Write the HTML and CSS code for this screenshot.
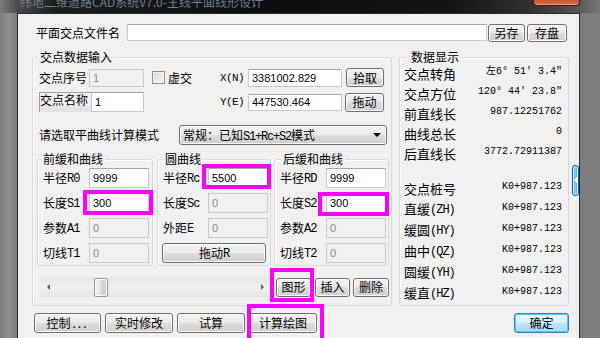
FILE: index.html
```html
<!DOCTYPE html>
<html>
<head>
<meta charset="utf-8">
<title>主线平面线形设计</title>
<link rel="stylesheet" href="styles.css">
</head>
<body>
<div class="window">
  <div class="titlebar">
    <span class="title">纬地二维道路CAD系统V7.0-主线平面线形设计</span>
    <span class="close"></span>
  </div>
  <div class="frame">
    <div class="client">
      <div class="file-row">
        <span class="lbl file-lbl">平面交点文件名</span>
        <div class="tb file-tb"></div>
        <button class="btn b-saveas">另存</button>
        <button class="btn b-save">存盘</button>
      </div>

      <div class="main">
        <div class="group g-input">
          <div class="legend lg-input">交点数据输入</div>
          <div class="row row-a">
            <span class="lbl w50">交点序号</span>
            <div class="tb dis w55 h18">1</div>
            <span class="chk-wrap"><span class="chk"></span><span class="chk-lbl">虚交</span></span>
            <span class="lbl coord">X(N)</span>
            <div class="tb w94 h18">3381002.829</div>
            <button class="btn b-pick">拾取</button>
          </div>
          <div class="row row-b">
            <span class="lbl name-box">交点名称</span>
            <div class="tb w53 h20">1</div>
            <span class="spacer"></span>
            <span class="lbl coord">Y(E)</span>
            <div class="tb w94 h17">447530.464</div>
            <button class="btn b-drag">拖动</button>
          </div>
          <div class="row row-c">
            <span class="lbl mode-lbl">请选取平曲线计算模式</span>
            <div class="combo">常规：已知<span class="m">S1+Rc+S2</span>模式<span class="arrow"></span></div>
          </div>
          <div class="sub-row">
            <div class="group sg sg1">
              <div class="legend">前缓和曲线</div>
              <div class="frow"><span class="lbl">半径<span class="m">R0</span></span><div class="tb ftb">9999</div></div>
              <div class="frow"><span class="lbl">长度<span class="m">S1</span></span><div class="tb ftb mk mk-s1">300</div></div>
              <div class="frow"><span class="lbl">参数<span class="m">A1</span></span><div class="tb ftb dis">0</div></div>
              <div class="frow"><span class="lbl">切线<span class="m">T1</span></span><div class="tb ftb dis">0</div></div>
            </div>
            <div class="group sg sg2">
              <div class="legend">圆曲线</div>
              <div class="frow"><span class="lbl">半径<span class="m">Rc</span></span><div class="tb ftb mk mk-rc">5500</div></div>
              <div class="frow"><span class="lbl">长度<span class="m">Sc</span></span><div class="tb ftb dis">0</div></div>
              <div class="frow"><span class="lbl">外距<span class="m">E</span></span><div class="tb ftb dis">0</div></div>
              <div class="frow"><button class="btn b-dragr">拖动<span class="m">R</span></button></div>
            </div>
            <div class="group sg sg3">
              <div class="legend">后缓和曲线</div>
              <div class="frow"><span class="lbl">半径<span class="m">RD</span></span><div class="tb ftb">9999</div></div>
              <div class="frow"><span class="lbl">长度<span class="m">S2</span></span><div class="tb ftb mk mk-s2">300</div></div>
              <div class="frow"><span class="lbl">参数<span class="m">A2</span></span><div class="tb ftb dis">0</div></div>
              <div class="frow"><span class="lbl">切线<span class="m">T2</span></span><div class="tb ftb dis">0</div></div>
            </div>
          </div>
          <div class="row scroll-row">
            <div class="hscroll">
              <span class="arr arr-l"></span>
              <span class="thumb"></span>
              <span class="arr arr-r"></span>
            </div>
            <button class="btn b-shape mk mk-shape">图形</button>
            <button class="btn b-ins">插入</button>
            <button class="btn b-del">删除</button>
          </div>
        </div>

        <div class="group g-data">
          <div class="legend lg-data">数据显示</div>
          <div class="dblock">
            <div class="drow"><span class="dl">交点转角</span><span class="dv">左6° 51′ 3.4″</span></div>
            <div class="drow"><span class="dl">交点方位</span><span class="dv">120° 44′ 23.8″</span></div>
            <div class="drow"><span class="dl">前直线长</span><span class="dv">987.12251762</span></div>
            <div class="drow"><span class="dl">曲线总长</span><span class="dv">0</span></div>
            <div class="drow"><span class="dl">后直线长</span><span class="dv">3772.72911387</span></div>
          </div>
          <div class="dblock dblock2">
            <div class="drow"><span class="dl">交点桩号</span><span class="dv">K0+987.123</span></div>
            <div class="drow"><span class="dl">直缓<span class="m">(ZH)</span></span><span class="dv">K0+987.123</span></div>
            <div class="drow"><span class="dl">缓圆<span class="m">(HY)</span></span><span class="dv">K0+987.123</span></div>
            <div class="drow"><span class="dl">曲中<span class="m">(QZ)</span></span><span class="dv">K0+987.123</span></div>
            <div class="drow"><span class="dl">圆缓<span class="m">(YH)</span></span><span class="dv">K0+987.123</span></div>
            <div class="drow"><span class="dl">缓直<span class="m">(HZ)</span></span><span class="dv">K0+987.123</span></div>
          </div>
        </div>

        <div class="handle"></div>
      </div>

      <div class="bottom-row">
        <button class="btn b-ctrl">控制<span class="dots">...</span></button>
        <button class="btn b-bot">实时修改</button>
        <button class="btn b-bot">试算</button>
        <button class="btn b-bot mk mk-calc">计算绘图</button>
        <button class="btn b-ok">确定</button>
      </div>
    </div>
  </div>
</div>
</body>
</html>
```

FILE: styles.css
```css
* { box-sizing: border-box; }

body {
  margin: 0;
  width: 600px;
  height: 338px;
  overflow: hidden;
  background: #858585;
  font-family: "Noto Sans CJK SC", sans-serif;
  font-size: 12px;
  color: #000;
}

.window {
  height: 338px;
  display: flex;
  flex-direction: column;
}

.titlebar {
  flex: none;
  height: 13px;
  display: flex;
  align-items: flex-start;
  overflow: hidden;
  background: linear-gradient(90deg, #7c7c7c 0%, #4a4a4a 3%, #1d1d1d 9%, #0d0d0d 45%, #141414 75%, #2e2e2e 88%, #555 96%, #777 100%);
}

.title {
  margin: -5px 0 0 20px;
  font-size: 12px;
  line-height: 14px;
  color: #6d7f94;
  white-space: nowrap;
}

.close {
  margin-left: auto;
  margin-right: 20px;
  width: 47px;
  height: 6px;
  border: 1px solid #4a1208;
  border-top: 0;
  border-radius: 0 0 4px 4px;
  background: linear-gradient(#c9573b, #d8674a);
  box-shadow: inset 0 -1px 0 #e89a84;
}

.frame {
  flex: 1;
  display: flex;
  padding: 0 20px 0 17px;
  background: linear-gradient(90deg, #7d7d7d, #8e8e8e 8px, #7d7d7d 17px);
}

.client {
  flex: 1;
  background: #f0f0f0;
  border: 1px solid #2a2a2a;
  border-bottom: 0;
  padding: 10px 0 0 14px;
}

/* generic */
.lbl {
  flex: none;
  line-height: 14px;
  white-space: nowrap;
}
.m {
  font-family: "Liberation Mono", monospace;
  font-size: 12px;
  letter-spacing: -1px;
  vertical-align: 1px;
}

.tb {
  flex: none;
  background: #fff;
  border: 1px solid #c5c9d0;
  border-top-color: #a3a7ae;
  font-family: "Liberation Sans", sans-serif;
  font-size: 11px;
  line-height: 16px;
  padding-left: 3px;
  white-space: nowrap;
  overflow: hidden;
}
.tb.dis {
  background: #f0f0f0;
  border-color: #c8c8c8;
  color: #8a8a8a;
}
.w55 { width: 55px; }
.w53 { width: 53px; }
.w94 { width: 94px; }
.h18 { height: 18px; }
.h20 { height: 20px; line-height: 18px; }
.h17 { height: 17px; line-height: 15px; }

.btn {
  flex: none;
  margin: 0;
  padding: 0;
  height: 20px;
  border: 1px solid #707070;
  border-radius: 3px;
  background: linear-gradient(#f2f2f2 0%, #ebebeb 50%, #dddddd 50%, #cfcfcf 100%);
  box-shadow: inset 0 0 0 1px #fbfbfb;
  font-family: "Noto Sans CJK SC", sans-serif;
  font-size: 12px;
  line-height: 16px;
  color: #000;
  text-align: center;
}

/* file row */
.file-row {
  display: flex;
  align-items: center;
  height: 17px;
}
.file-lbl {
  margin-left: 4px;
  width: 91px;
}
.file-tb {
  width: 360px;
  height: 17px;
}
.b-saveas {
  margin-left: 1px;
  width: 37px;
  height: 18px;
}
.b-save {
  margin-left: 2px;
  width: 40px;
  height: 18px;
}

/* main */
.main {
  display: flex;
  align-items: flex-start;
  margin-top: 16px;
}

.group {
  flex: none;
  border: 1px solid #d3dbe1;
  border-radius: 3px;
  box-shadow: inset 1px 1px 0 #fff;
}
.legend {
  width: fit-content;
  margin: -8px 0 0 5px;
  padding: 0 2px;
  height: 14px;
  line-height: 14px;
  background: #f0f0f0;
  white-space: nowrap;
}

.g-input {
  width: 360px;
  height: 249px;
}

.row {
  display: flex;
  align-items: center;
  padding-left: 6px;
}
.row-a { margin-top: 4px; height: 19px; }
.row-b { margin-top: 5px; height: 20px; }
.row-c { margin-top: 13px; height: 20px; }

.w50 { width: 50px; }

.chk-wrap {
  flex: none;
  display: flex;
  align-items: center;
  width: 68px;
  margin-left: 8px;
}
.chk {
  width: 13px;
  height: 13px;
  border: 1px solid #8e8f8f;
  background: linear-gradient(135deg, #d6d6d6, #f8f8f8);
  box-shadow: inset 0 0 0 1px #f4f4f4;
}
.chk-lbl {
  margin-left: 3px;
  line-height: 14px;
}

.coord {
  width: 28px;
  font-family: "Liberation Mono", monospace;
  font-size: 11px;
  letter-spacing: -0.6px;
}

.b-pick {
  margin-left: 4px;
  width: 38px;
  height: 19px;
}

.name-box {
  width: 52px;
  height: 20px;
  line-height: 14px;
  background: linear-gradient(#f0f0f0 0, #f0f0f0 13px, #e4e4e4 13px);
  border-left: 1px solid #a0a0a0;
  border-top: 1px solid #a0a0a0;
}
.spacer {
  flex: none;
  width: 76px;
}
.b-drag {
  margin-left: 3px;
  width: 39px;
  height: 19px;
}

.mode-lbl { width: 140px; }
.combo {
  position: relative;
  flex: none;
  width: 208px;
  height: 20px;
  border: 1px solid #707070;
  border-radius: 3px;
  background: linear-gradient(#f2f2f2 0%, #ebebeb 50%, #dddddd 50%, #cfcfcf 100%);
  box-shadow: inset 0 0 0 1px #fbfbfb;
  padding-left: 3px;
  line-height: 17px;
  white-space: nowrap;
}
.combo .m { font-size: 12px; letter-spacing: -1.2px; vertical-align: 0; }
.arrow {
  position: absolute;
  right: 5px;
  top: 7px;
  width: 0;
  height: 0;
  border-left: 4px solid transparent;
  border-right: 4px solid transparent;
  border-top: 4px solid #000;
}

/* sub groups */
.sub-row {
  display: flex;
  margin-top: 14px;
  padding-left: 4px;
  height: 107px;
}
.sg { height: 107px; }
.sg1 { width: 116px; }
.sg2 { width: 114px; margin-left: 4px; }
.sg3 { width: 115px; margin-left: 3px; }
.sg1 .legend { margin-left: 3px; }
.sg3 .legend { margin-left: 6px; }

.frow {
  display: flex;
  align-items: center;
  height: 20px;
  margin-top: 5px;
  padding-left: 5px;
}
.legend + .frow { margin-top: 2px; }
.frow .lbl { flex: 1; }
.ftb {
  width: 60px;
  height: 20px;
  line-height: 18px;
  margin-right: 2px;
}
.sg1 .ftb { margin-right: 3px; }

.b-dragr {
  margin-left: -1px;
  width: 104px;
  height: 20px;
}

/* scroll row */
.scroll-row {
  margin-top: 11px;
  height: 20px;
  padding-left: 7px;
}
.hscroll {
  flex: none;
  width: 230px;
  height: 20px;
  display: flex;
  align-items: center;
  background: linear-gradient(#e6e6e6, #efefef 50%, #e6e6e6);
}
.arr {
  flex: none;
  width: 0;
  height: 0;
  border-top: 3px solid transparent;
  border-bottom: 3px solid transparent;
}
.arr-l {
  margin-left: 7px;
  border-right: 3px solid #5a5a5a;
}
.arr-r {
  margin-left: auto;
  margin-right: 6px;
  border-left: 3px solid #5a5a5a;
}
.thumb {
  flex: none;
  margin-left: 44px;
  width: 14px;
  height: 19px;
  border: 1px solid #979797;
  border-radius: 2px;
  background: linear-gradient(90deg, #f3f3f3, #e4e4e4 50%, #d4d4d4 50%, #cecece);
  box-shadow: inset 0 0 0 1px #fafafa;
}
.b-shape {
  margin-left: 6px;
  width: 35px;
  height: 19px;
}
.b-ins {
  margin-left: 4px;
  width: 35px;
  height: 19px;
}
.b-del {
  margin-left: 3px;
  width: 36px;
  height: 19px;
}

/* data group */
.g-data {
  width: 170px;
  height: 249px;
  margin-left: 7px;
  padding: 0 6px 0 4px;
}
.lg-data { margin-left: 5px; }
.dblock { margin-top: -1px; }
.dblock2 { margin-top: 15px; }
.drow {
  display: flex;
  align-items: center;
  justify-content: space-between;
  height: 20px;
}
.dblock2 .drow { height: 21px; }
.dl {
  font-size: 13px;
  line-height: 15px;
  white-space: nowrap;
}
.dl .m { font-size: 12px; letter-spacing: -1px; vertical-align: 1px; }
.dv {
  font-family: "Liberation Mono", "Noto Sans CJK SC", monospace;
  font-size: 10px;
  line-height: 12px;
  margin-top: -3px;
  white-space: nowrap;
}

.handle {
  position: relative;
  flex: none;
  margin: 108px 0 0 3px;
  width: 7px;
  height: 31px;
  border: 1px solid #1a5e96;
  border-radius: 3px;
  background: linear-gradient(90deg, #2f93db, #8ad6fa 45%, #2a88cf);
  box-shadow: inset 0 0 0 1px #d6f2ff;
}
.handle::after {
  content: "";
  position: absolute;
  left: 1px;
  top: 11px;
  border-top: 3px solid transparent;
  border-bottom: 3px solid transparent;
  border-right: 3px solid #fff;
}

/* bottom row */
.bottom-row {
  display: flex;
  align-items: center;
  margin-top: 7px;
  padding-left: 2px;
  height: 20px;
}
.b-ctrl { width: 67px; }
.b-ctrl .dots { letter-spacing: 2px; margin-left: 2px; }
.b-bot { width: 68px; margin-left: 4px; }
.b-ok {
  margin-left: auto;
  margin-right: 10px;
  width: 55px;
  border-color: #3c7fb1;
  background: linear-gradient(#eaf6fd 0%, #d9f0fc 50%, #bee6fd 50%, #a7d9f5 100%);
  box-shadow: inset 0 0 0 1px #48d2fa;
}

/* magenta annotation marks */
.mk { position: relative; overflow: visible; }
.mk::after {
  content: "";
  position: absolute;
  border: 4px solid #ff00ff;
  pointer-events: none;
}
.mk-s1::after { left: -7px; right: -5px; top: -4px; bottom: -3px; }
.mk-rc::after { left: -7px; right: -4px; top: -5px; bottom: -2px; }
.mk-s2::after { left: -9px; right: -4px; top: -2px; bottom: -4px; }
.mk-shape::after { left: -7px; right: -4px; top: -11px; bottom: -6px; }
.mk-calc::after { left: -3px; right: -8px; top: -10px; bottom: -10px; }
```
